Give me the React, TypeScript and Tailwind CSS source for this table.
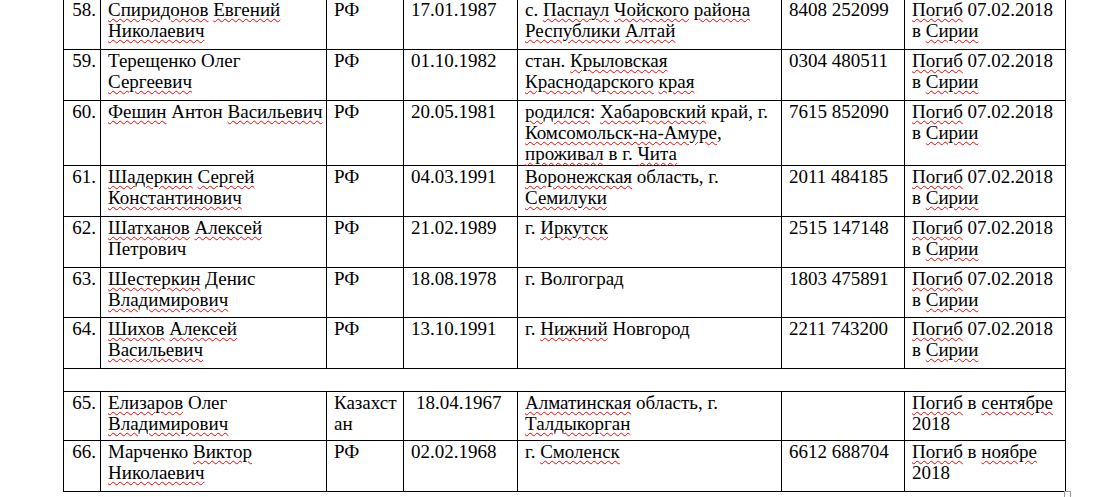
const rows: { n: string; name: string[]; country: string[]; date: string; dateIndent?: boolean; place: string[]; passport: string; result: string[]; h: string }[] = [
  { n: "58.", name: ["~Спиридонов ~Евгений", "~Николаевич"], country: ["РФ"], date: "17.01.1987", place: ["с. ~Паспаул ~Чойского ~района", "~Республики ~Алтай"], passport: "8408 252099", result: ["~Погиб 07.02.2018", "в ~Сирии"], h: "h-[51px]" },
  { n: "59.", name: ["Терещенко Олег", "~Сергеевич"], country: ["РФ"], date: "01.10.1982", place: ["стан. ~Крыловская", "~Краснодарского ~края"], passport: "0304 480511", result: ["~Погиб 07.02.2018", "в ~Сирии"], h: "h-[51px]" },
  { n: "60.", name: ["~Фешин Антон ~Васильевич"], country: ["РФ"], date: "20.05.1981", place: ["~родился: ~Хабаровский край, г.", "~Комсомольск-на-Амуре,", "~проживал в г. ~Чита"], passport: "7615 852090", result: ["~Погиб 07.02.2018", "в ~Сирии"], h: "h-[65px]" },
  { n: "61.", name: ["~Шадеркин ~Сергей", "~Константинович"], country: ["РФ"], date: "04.03.1991", place: ["~Воронежская область, г.", "~Семилуки"], passport: "2011 484185", result: ["~Погиб 07.02.2018", "в ~Сирии"], h: "h-[51px]" },
  { n: "62.", name: ["~Шатханов ~Алексей", "Петрович"], country: ["РФ"], date: "21.02.1989", place: ["г. ~Иркутск"], passport: "2515 147148", result: ["~Погиб 07.02.2018", "в ~Сирии"], h: "h-[51px]" },
  { n: "63.", name: ["~Шестеркин Денис", "~Владимирович"], country: ["РФ"], date: "18.08.1978", place: ["г. Волгоград"], passport: "1803 475891", result: ["~Погиб 07.02.2018", "в ~Сирии"], h: "h-[50px]" },
  { n: "64.", name: ["~Шихов ~Алексей", "~Васильевич"], country: ["РФ"], date: "13.10.1991", place: ["г. ~Нижний Новгород"], passport: "2211 743200", result: ["~Погиб 07.02.2018", "в ~Сирии"], h: "h-[51px]" },
];

const rows2: typeof rows = [
  { n: "65.", name: ["~Елизаров Олег", "~Владимирович"], country: ["Казахст", "ан"], date: "18.04.1967", dateIndent: true, place: ["~Алматинская область, г.", "~Талдыкорган"], passport: "", result: ["~Погиб в ~сентябре", "2018"], h: "h-[49px]" },
  { n: "66.", name: ["Марченко ~Виктор", "~Николаевич"], country: ["РФ"], date: "02.02.1968", place: ["г. ~Смоленск"], passport: "6612 688704", result: ["~Погиб в ~ноябре", "2018"], h: "h-[51px]" },
];

function Line({ text }: { text: string }) {
  const parts = text.split(/(~[\p{L}-]+)/u);
  return (
    <div className="whitespace-nowrap">
      {parts.map((p, i) =>
        p.startsWith("~") ? (
          <span key={i} className="underline decoration-wavy decoration-[#ff0000] decoration-[1px] underline-offset-[2px]">
            {p.slice(1)}
          </span>
        ) : (
          <span key={i}>{p}</span>
        )
      )}
    </div>
  );
}

const cell = "border border-black align-top px-[7px] pt-0";

function Row({ r }: { r: (typeof rows)[number] }) {
  return (
    <tr className={r.h}>
      <td className="border border-black align-top pr-[4px] text-right">{r.n}</td>
      <td className={cell}>{r.name.map((l, i) => <Line key={i} text={l} />)}</td>
      <td className={cell}>{r.country.map((l, i) => <Line key={i} text={l} />)}</td>
      <td className={`${cell} ${r.dateIndent ? "pl-[12px]" : ""}`}>{r.date}</td>
      <td className={cell}>{r.place.map((l, i) => <Line key={i} text={l} />)}</td>
      <td className={cell}>{r.passport}</td>
      <td className={cell}>{r.result.map((l, i) => <Line key={i} text={l} />)}</td>
    </tr>
  );
}

export default function App() {
  return (
    <div className="relative h-[497px] overflow-hidden bg-white text-black font-['Liberation_Serif','Times_New_Roman',serif] text-[19px] leading-[21px]">
      <table className="ml-[63px] -mt-[2px] table-fixed border-collapse w-[1002px]">
        <colgroup>
          <col className="w-[37px]" />
          <col className="w-[226px]" />
          <col className="w-[77px]" />
          <col className="w-[114px]" />
          <col className="w-[264px]" />
          <col className="w-[123px]" />
          <col className="w-[161px]" />
        </colgroup>
        <tbody>
          {rows.map((r) => (
            <Row key={r.n} r={r} />
          ))}
          <tr className="h-[23px]">
            <td colSpan={7} className="border border-black" />
          </tr>
          {rows2.map((r) => (
            <Row key={r.n} r={r} />
          ))}
        </tbody>
      </table>
      <div className="absolute left-[1064px] top-[491px] h-[7px] w-[7px] border border-[#9a9a9a] bg-white" />
    </div>
  );
}
